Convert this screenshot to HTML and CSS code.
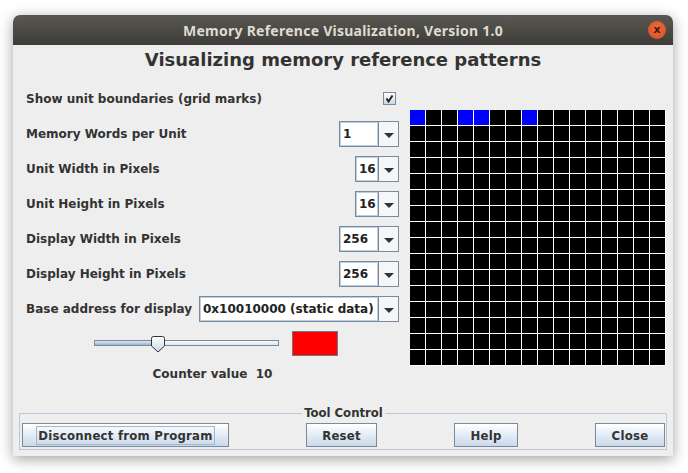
FILE: index.html
```html
<!DOCTYPE html>
<html>
<head>
<meta charset="utf-8">
<link rel="stylesheet" href="styles.css">
</head>
<body>
<div class="window">
  <div class="titlebar">
    <span class="title">Memory Reference Visualization, Version 1.0</span>
    <span class="close">x</span>
  </div>
  <div class="content">
    <h1 class="heading">Visualizing memory reference patterns</h1>
    <div class="main">
      <div class="controls">
        <div class="row">
          <span class="label">Show unit boundaries (grid marks)</span>
          <span class="checkbox"><svg width="11" height="11" viewBox="0 0 11 11"><path d="M2.5 5.5 L4.5 8.5 L8.5 2.5" fill="none" stroke="#222" stroke-width="2"/></svg></span>
        </div>
        <div class="row">
          <span class="label">Memory Words per Unit</span>
          <span class="combo"><span class="field w40">1</span><span class="arrow"></span></span>
        </div>
        <div class="row">
          <span class="label">Unit Width in Pixels</span>
          <span class="combo"><span class="field w24">16</span><span class="arrow"></span></span>
        </div>
        <div class="row">
          <span class="label">Unit Height in Pixels</span>
          <span class="combo"><span class="field w24">16</span><span class="arrow"></span></span>
        </div>
        <div class="row">
          <span class="label">Display Width in Pixels</span>
          <span class="combo"><span class="field w40">256</span><span class="arrow"></span></span>
        </div>
        <div class="row">
          <span class="label">Display Height in Pixels</span>
          <span class="combo"><span class="field w40">256</span><span class="arrow"></span></span>
        </div>
        <div class="row">
          <span class="label">Base address for display</span>
          <span class="combo"><span class="field w180">0x10010000 (static data)</span><span class="arrow"></span></span>
        </div>
        <div class="slider-row">
          <div class="slider">
            <div class="track"><div class="fill"></div></div>
            <svg class="thumb" width="17" height="17" viewBox="0 0 17 17">
              <defs><linearGradient id="tg" x1="0" y1="0" x2="0" y2="1"><stop offset="0" stop-color="#ffffff"/><stop offset="1" stop-color="#c6d6e8"/></linearGradient></defs>
              <path d="M1.5 2.5 Q1.5 0.5 3.5 0.5 H12.5 Q14.5 0.5 14.5 2.5 V10 L8 16 L1.5 10 Z" fill="url(#tg)" stroke="#333" stroke-width="1"/>
            </svg>
          </div>
          <div class="swatch"></div>
        </div>
        <div class="counter">Counter value&nbsp; 10</div>
      </div>
      <div class="grid">
        <span class="cell blue"></span><span class="cell"></span><span class="cell"></span><span class="cell blue"></span><span class="cell blue"></span><span class="cell"></span><span class="cell"></span><span class="cell blue"></span><span class="cell"></span><span class="cell"></span><span class="cell"></span><span class="cell"></span><span class="cell"></span><span class="cell"></span><span class="cell"></span><span class="cell"></span>
      </div>
    </div>
    <fieldset class="toolbox">
      <legend class="legend">Tool Control</legend>
      <button class="btn btn-focus"><span class="focus">Disconnect from Program</span></button>
      <button class="btn btn-reset">Reset</button>
      <button class="btn btn-help">Help</button>
      <button class="btn btn-close">Close</button>
    </fieldset>
  </div>
</div>
</body>
</html>
```

FILE: styles.css
```css
html, body {
  margin: 0;
  padding: 0;
  background: #ffffff;
}
body {
  font-family: "DejaVu Sans", sans-serif;
  height: 473px;
  overflow: hidden;
}
.window {
  margin: 15px 0 0 13px;
  width: 660px;
  border-radius: 7px 7px 0 0;
  box-shadow: 0 3px 14px rgba(0, 0, 0, 0.38);
}
.titlebar {
  position: relative;
  height: 30px;
  display: flex;
  align-items: center;
  justify-content: center;
  background: linear-gradient(#5a5852, #3d3c38);
  border-radius: 7px 7px 0 0;
}
.title {
  color: #dfdbd2;
  font: bold 14px "Noto Sans", "DejaVu Sans", sans-serif;
  letter-spacing: 0.25px;
}
.close {
  position: absolute;
  right: 7px;
  top: 6px;
  width: 18px;
  height: 18px;
  border-radius: 50%;
  background: radial-gradient(circle at 50% 40%, #f06b3e, #d44d1f);
  color: #3b1a0e;
  font: bold 11px/17px "DejaVu Sans", sans-serif;
  text-align: center;
}
.content {
  background: #eeeeee;
  height: 411px;
  padding-top: 4px;
  box-sizing: border-box;
}
.heading {
  margin: 0 0 10px 0;
  text-align: center;
  font: bold 18px/22px "DejaVu Sans", sans-serif;
  color: #333333;
}
.main {
  display: flex;
  gap: 11px;
  padding-left: 13px;
}
.controls {
  width: 373px;
}
.row {
  height: 35px;
  display: flex;
  align-items: center;
  justify-content: space-between;
}
.label {
  font: bold 12px "DejaVu Sans", sans-serif;
  color: #333333;
  white-space: nowrap;
}
.checkbox {
  width: 11px;
  height: 11px;
  margin-right: 3px;
  border: 1px solid #7a8a99;
  background: linear-gradient(#ffffff, #c8d8e8);
  display: flex;
}
.combo {
  display: flex;
  height: 26px;
}
.field {
  box-sizing: border-box;
  height: 26px;
  border: 1px solid #7a8a99;
  box-shadow: inset 0 0 0 1px #b8cfe5;
  background: #ffffff;
  padding-left: 3px;
  font: bold 12px/24px "DejaVu Sans", sans-serif;
  color: #222222;
  white-space: nowrap;
}
.w40 { width: 40px; }
.w24 { width: 24px; }
.w180 { width: 180px; }
.arrow {
  box-sizing: border-box;
  width: 20px;
  height: 26px;
  border: 1px solid #7a8a99;
  border-left: none;
  background: #f4f6f8;
  position: relative;
}
.arrow::after {
  content: "";
  position: absolute;
  left: 5px;
  top: 11px;
  border-left: 5px solid transparent;
  border-right: 5px solid transparent;
  border-top: 5px solid #333333;
}
.slider-row {
  height: 34px;
  display: flex;
  align-items: center;
  gap: 13px;
  padding-left: 68px;
}
.slider {
  position: relative;
  width: 185px;
  height: 17px;
  display: flex;
  align-items: center;
}
.track {
  box-sizing: border-box;
  width: 185px;
  height: 6px;
  border: 1px solid #7a8a99;
  background: linear-gradient(#f8fafc, #dde6ef);
  display: flex;
}
.fill {
  width: 62px;
  background: linear-gradient(#dbe6f2, #9cb4d0);
}
.thumb {
  position: absolute;
  left: 56px;
  top: 1px;
}
.swatch {
  box-sizing: border-box;
  width: 46px;
  height: 25px;
  border: 1px solid #6b7b8c;
  background: #ff0000;
}
.counter {
  height: 28px;
  text-align: center;
  font: bold 12px/28px "DejaVu Sans", sans-serif;
  color: #333333;
}
.grid {
  margin-top: 29px;
  width: 256px;
  height: 256px;
  display: flex;
  align-content: flex-start;
  background-color: #000000;
  background-image:
    linear-gradient(to right, transparent 15px, #ffffff 15px),
    linear-gradient(to bottom, transparent 15px, #ffffff 15px);
  background-size: 16px 16px;
}
.cell {
  width: 15px;
  height: 15px;
  margin-right: 1px;
  flex: none;
}
.cell.blue {
  background: #0000ff;
}
.toolbox {
  margin: 17px 6px 0 6px;
  padding: 0 1px 2px 2px;
  border: 1px solid #b8c9db;
  display: flex;
  justify-content: space-between;
  min-width: 0;
}
.legend {
  margin: 0 auto;
  padding: 0 2px;
  font: bold 13px/16px "DejaVu Sans Condensed", "DejaVu Sans", sans-serif;
  color: #333333;
}
.btn {
  height: 24px;
  margin-top: 2px;
  border: 1px solid #7a8a99;
  background: linear-gradient(#ffffff, #c9d9ea);
  font: bold 13px "DejaVu Sans Condensed", "DejaVu Sans", sans-serif;
  letter-spacing: 0.25px;
  color: #333333;
  padding: 0;
}
.btn-focus { width: 207px; }
.btn-reset { width: 71px; }
.btn-help { width: 64px; }
.btn-close { width: 70px; }
.focus {
  border: 1px solid #9fb7cf;
  padding: 1px 1px;
}
```
